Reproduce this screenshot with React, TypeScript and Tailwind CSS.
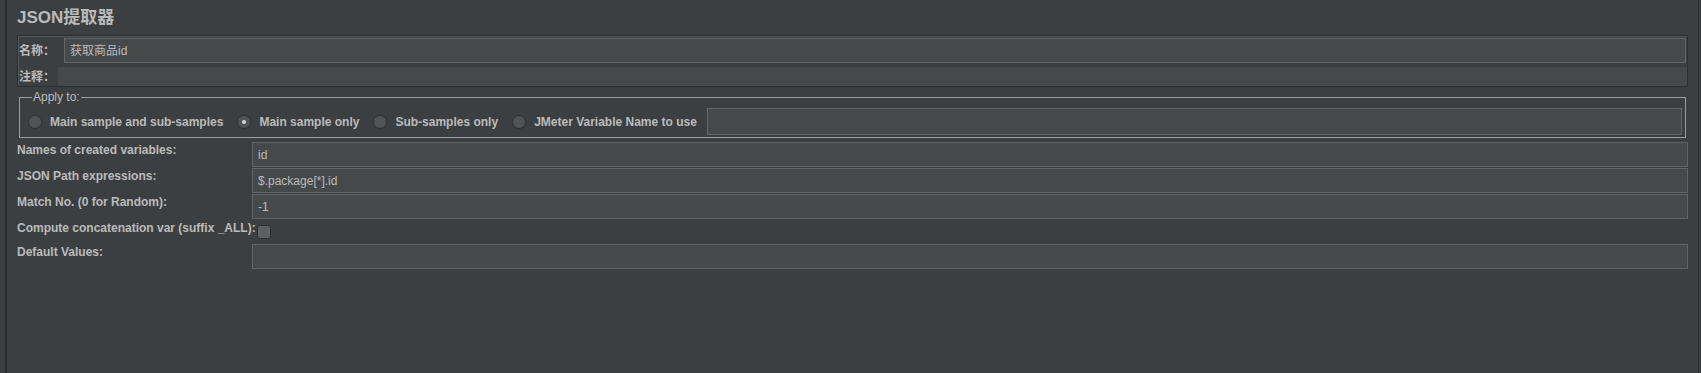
const font = { fontFamily: '"Liberation Sans", Arial, "Noto Sans CJK SC", sans-serif' };

interface RowProps {
  label: string;
  value?: string;
}

// plain text field with JMeter darcula look
function Field({ value, className = '' }: { value?: string; className?: string }) {
  return (
    <div
      className={`flex h-[25px] items-center border border-[#646464] bg-[#45494a] px-[5px] text-[12px] text-[#bbbbbb] ${className}`}
    >
      {value}
    </div>
  );
}

function Row({ label, value }: RowProps) {
  return (
    <div className="flex items-start">
      <div className="w-[235px] shrink-0 text-[12px] font-bold leading-[16px] text-[#bbbbbb]">{label}</div>
      <Field value={value} className="flex-1" />
    </div>
  );
}

function Radio({ label, checked }: { label: string; checked?: boolean }) {
  return (
    <div className="flex items-center gap-[8px]">
      <div className="flex h-[14px] w-[14px] items-center justify-center rounded-full border border-[#2e3032] bg-[#515456]">
        {checked && <div className="h-[4px] w-[4px] rounded-full bg-[#d6d6d6]" />}
      </div>
      <span className="text-[12px] font-bold text-[#bbbbbb]">{label}</span>
    </div>
  );
}

export default function App() {
  return (
    <div className="flex h-[373px] w-full bg-[#3c3f41]" style={font}>
      <div className="w-[5px] shrink-0" />
      <div className="w-[2px] shrink-0 bg-[#2b2d2f]" />
      <div className="flex-1 px-[10px]">
        {/* title */}
        <div className="h-[35px] pt-[7px] text-[17px] font-bold leading-[22px] text-[#bbbbbb]">JSON提取器</div>

        {/* name / comment */}
        <div className="border border-[#2b2d2f] shadow-[inset_1px_1px_0_#55585a]">
          <div className="flex items-center pt-[2px] pr-px">
            <div className="w-[46px] shrink-0 pl-[1px] text-[12px] font-bold text-[#bbbbbb]">名称：</div>
            <Field value="获取商品id" className="flex-1" />
          </div>
          <div className="mt-[4px] flex h-[19px] items-center">
            <div className="w-[40px] shrink-0 pl-[1px] text-[12px] font-bold text-[#bbbbbb]">注释：</div>
            <div className="h-full flex-1 bg-[#45494a]" />
          </div>
        </div>

        {/* apply to */}
        <fieldset className="mx-[2px] mt-[3px] border border-[#9a9c9e] pl-[8px] pr-[3px] pb-[2px]">
          <legend className="ml-[4px] px-px text-[12px] leading-[14px] text-[#bbbbbb]">Apply to:</legend>
          <div className="flex items-center gap-[14px] pt-[4px]">
            <Radio label="Main sample and sub-samples" />
            <Radio label="Main sample only" checked />
            <Radio label="Sub-samples only" />
            <Radio label="JMeter Variable Name to use" />
            <Field className="ml-[-4px] h-[27px] flex-1" />
          </div>
        </fieldset>

        {/* rows */}
        <div className="mt-[4px] flex flex-col gap-[1px]">
          <Row label="Names of created variables:" value="id" />
          <Row label="JSON Path expressions:" value="$.package[*].id" />
          <Row label="Match No. (0 for Random):" value="-1" />
          <div className="flex h-[23px] items-start">
            <div className="w-[240px] shrink-0 text-[12px] font-bold leading-[16px] text-[#bbbbbb]">
              Compute concatenation var (suffix _ALL):
            </div>
            <div className="mt-[5px] h-[14px] w-[14px] rounded-[2px] border border-[#2e3032] bg-[#5e6163]" />
          </div>
          <Row label="Default Values:" />
        </div>
      </div>
      <div className="w-px shrink-0 bg-[#2b2d2f]" />
      <div className="w-[2px] shrink-0" />
    </div>
  );
}
